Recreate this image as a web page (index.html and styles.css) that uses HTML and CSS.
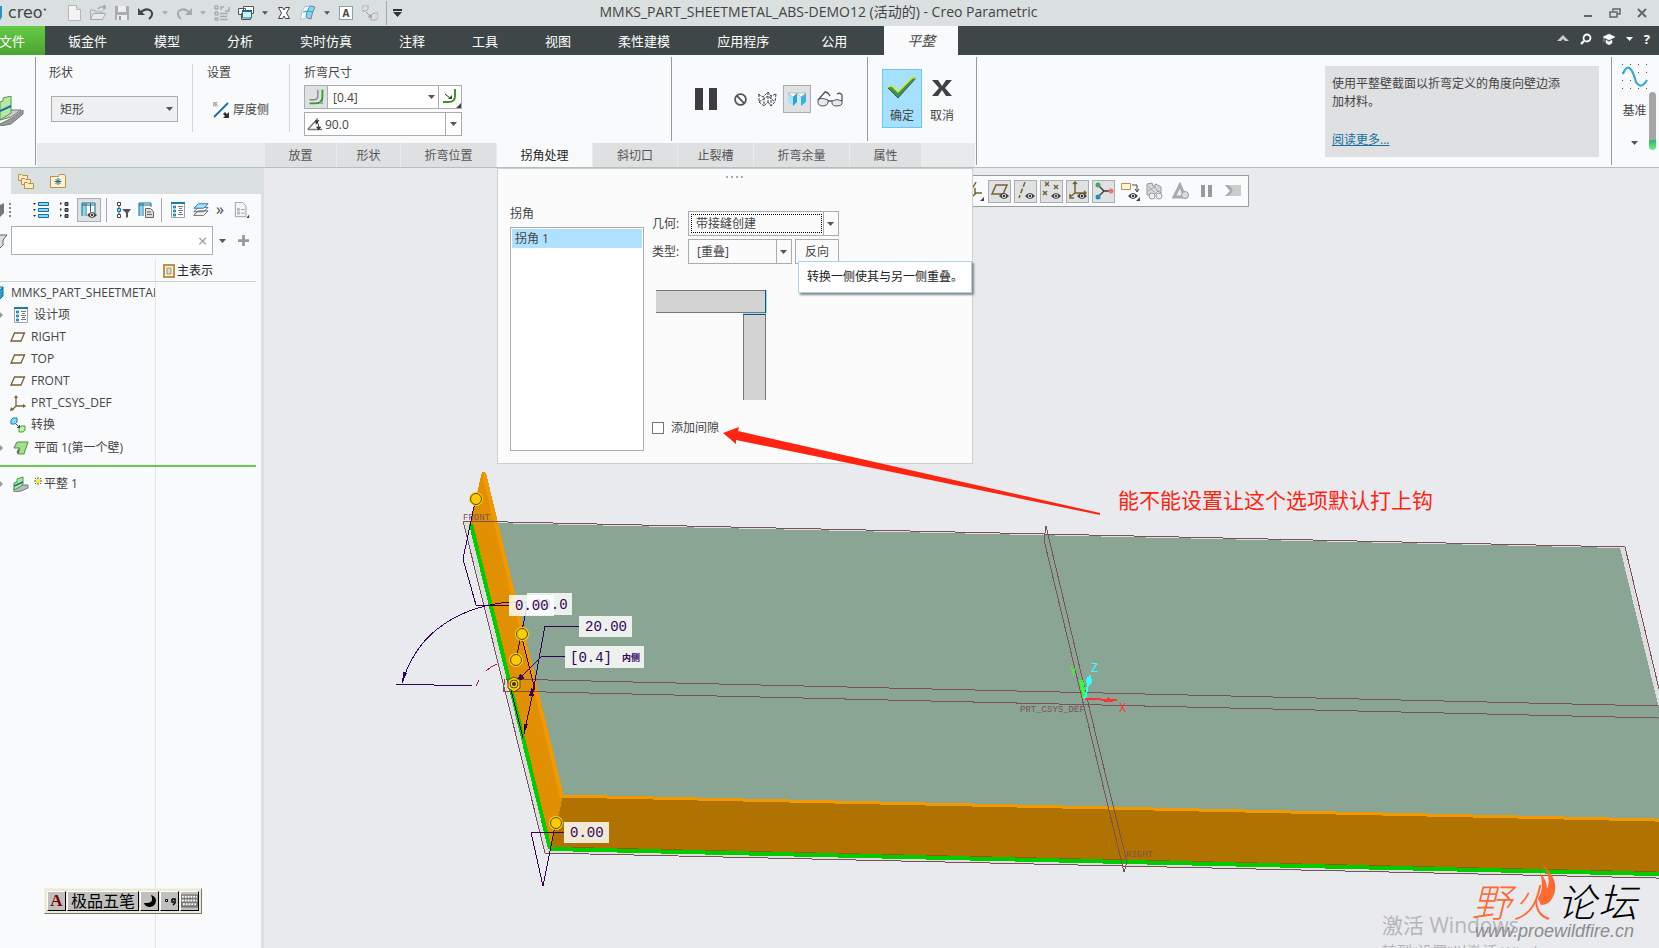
FILE: index.html
```html
<!DOCTYPE html>
<html lang="zh-CN">
<head>
    <meta charset="UTF-8">
    <meta name="viewport" content="width=device-width, initial-scale=1.0">
    <title>MMKS_PART_SHEETMETAL_ABS-DEMO12 (活动的) - Creo Parametric</title>
    <link rel="stylesheet" href="styles.css">
</head>
<body>
    <!-- Shared icons -->
    <svg class="sprite" aria-hidden="true">
        <symbol id="caret" viewBox="0 0 7 4"><path d="M0 0h7L3.500 4z" fill="currentColor"/></symbol>
        <symbol id="plane" viewBox="0 0 16 16"><path d="M4.500 4h10L11 12H1z" fill="none" stroke="#7a6030" stroke-width="1.300"/></symbol>
        <symbol id="eye" viewBox="0 0 10 6"><path d="M0 3Q5-3 10 3Q5 9 0 3z" fill="#444"/><circle cx="5" cy="3" r="2" fill="#fff"/><circle cx="5" cy="3" r="1.200" fill="#333"/></symbol>
        <symbol id="items" viewBox="0 0 16 16"><path d="M1.500.500h13v15h-13z" fill="#fff" stroke="#99a3a8"/><path d="M1 1h14" stroke="#1c7ca8" stroke-width="2"/><path d="M3.500 4h2v2h-2zM3.500 8h2v2h-2zM3.500 12h2v2h-2z" fill="#7fd0f5" stroke="#2280a8"/><path d="M8 4.500h5M9 6.500h3M8 8.500h5M9 10.500h3M8 12.500h5" stroke="#777"/></symbol>
        <symbol id="csys" viewBox="0 0 16 16"><path d="M6 11V2M6 11h9M6 11l-4 4" fill="none" stroke="#7a6030" stroke-width="1.300"/><path d="M6 0l2 3H4zM16 11l-3-2v4zM0 16l1-4 3 3z" fill="#7a6030"/></symbol>
        <symbol id="cube" viewBox="0 0 16 16"><path d="M1 6l5-4h9l-4 4z" fill="#c9efff"/><path d="M1 6h10v9H1z" fill="#8ad6f5"/><path d="M11 6l4-4v9l-4 4z" fill="#279fd0"/><path d="M1 6l5-4h9v9l-4 4H1zM1 6h10v9M11 6l4-4" fill="none" stroke="#176f94"/></symbol>
        <symbol id="flange" viewBox="0 0 24 30"><path d="M0 28l12-6 11-8v4L11 28 0 30z" fill="#999" stroke="#777"/><path d="M0 24l11-3 10-7h-9L0 20z" fill="#ccc" stroke="#777"/><path d="M0 6l3-1V2l8-2v17L0 24z" fill="#b7e8a8" stroke="#4d9b42"/><path d="M0 15l11-5" stroke="#16709c" stroke-width="2"/></symbol>
    </svg>

    <header class="title-bar">
        <div class="quick-access">
            <svg class="brand-mark" viewBox="0 0 2 14"><path d="M0 0h2v11l-2 3z" fill="#2694bf"/></svg>
            <span class="brand">creo<sup>•</sup></span>
            <button aria-label="新建"><svg viewBox="0 0 16 16"><path d="M2.500.500h8l4 4v11h-12z" fill="#f3f3f3" stroke="#b5b8b8"/><path d="M10.500.500v4h4" fill="#ddd" stroke="#b5b8b8"/></svg></button>
            <button aria-label="打开"><svg viewBox="0 0 16 16"><path d="M.500 14V5h4l1 2h7v3" fill="#ddd" stroke="#aaa"/><path d="M.500 14.500l3-6h12l-3 6z" fill="#e9e9e9" stroke="#aaa"/><path d="M8 4q2-3 6-2M14 0v4l2-2z" fill="none" stroke="#aaa" stroke-width="1.500"/></svg></button>
            <button aria-label="保存"><svg viewBox="0 0 16 16"><path d="M1 1h13l1 1v13H1z" fill="#aaadad"/><path d="M4 1h8v6H4zM3 10h10v5H3z" fill="#eee"/><path d="M5 11h2v4H5z" fill="#999"/></svg></button>
            <button aria-label="撤消"><svg viewBox="0 0 16 16"><path d="M2 8q6-6 11-2q3 4-2 8" fill="none" stroke="#444" stroke-width="2"/><path d="M0 3v7h7z" fill="#444"/></svg></button>
            <svg class="caret pale"><use href="#caret"/></svg>
            <button aria-label="重做"><svg viewBox="0 0 16 16"><path d="M14 8Q8 2 3 6q-3 4 2 8" fill="none" stroke="#aaa" stroke-width="2"/><path d="M16 3v7H9z" fill="#aaa"/></svg></button>
            <svg class="caret pale"><use href="#caret"/></svg>
            <button aria-label="重新生成"><svg viewBox="0 0 16 16"><path d="M1 1h3v3H1zM1 7h3v3H1zM1 13h3v2H1z" fill="none" stroke="#999"/><path d="M6 8.500h8M6 11.500h7M6 14.500h8M7 5V2h3M15 2v4h-4" fill="none" stroke="#aaa" stroke-width="1.500"/></svg></button>
            <button aria-label="窗口"><svg viewBox="0 0 16 16"><path d="M5.500 1.500h10v7h-10zM.500 3.500h7v6h-7zM3.500 8.500h9v6h-9z" fill="#fff" stroke="#555"/><path d="M4.500 6h9v7h-9z" fill="#d7f2ff" stroke="#176f94"/><path d="M4 6h10" stroke="#176f94" stroke-width="2"/></svg></button>
            <svg class="caret"><use href="#caret"/></svg>
            <button aria-label="关闭窗口"><svg viewBox="0 0 16 16"><path d="M2.500 2.500h4L8 5l1.500-2.500h4L10.500 8l3 5.500h-4L8 11l-1.500 2.500h-4l3-5.500z" fill="#fff" stroke="#444"/></svg></button>
            <button aria-label="外观"><svg viewBox="0 0 16 16"><path d="M1 14Q1 6 5 2q6-2 10 0-3 5-4 12-5-3-10 0z" fill="#8dd4f2" stroke="#668b9c"/><path d="M1 14Q1 6 5 2l5-1Q6 6 6 13z" fill="#eef9ff"/><path d="M3 7q5-2 10 0M10 1Q6 7 6 12" fill="none" stroke="#3997bb"/></svg></button>
            <svg class="caret"><use href="#caret"/></svg>
            <button class="letter-icon" aria-label="注释显示">A</button>
            <button aria-label="转换"><svg viewBox="0 0 16 16"><path d="M0 2l3-2h3v4L4 6H0zM9 10l3-2h4v5l-2 2H9z" fill="#ddd" stroke="#aaa"/><path d="M4 7l5 5M9 9v3H6" fill="none" stroke="#999"/></svg></button>
            <span class="quick-end"></span>
            <svg class="caret menu" viewBox="0 0 9 8"><path d="M0 0h9v2H0zM0 3h9L4.500 8z" fill="#333"/></svg>
        </div>
        <h1>MMKS_PART_SHEETMETAL_ABS-DEMO12 (活动的) - Creo Parametric</h1>
        <div class="window-buttons">
            <button aria-label="最小化"><svg viewBox="0 0 12 12"><path d="M2 9h8" stroke="#666" stroke-width="2"/></svg></button>
            <button aria-label="还原"><svg viewBox="0 0 12 12"><path d="M4 4V2h7v5H8M1 5h7v5H1z" fill="none" stroke="#666" stroke-width="1.500"/></svg></button>
            <button aria-label="关闭"><svg viewBox="0 0 12 12"><path d="M2 2l8 8M10 2l-8 8" stroke="#666" stroke-width="2"/></svg></button>
        </div>
    </header>

    <nav class="tab-bar">
        <a class="tab file" href="#">文件</a>
        <a class="tab" href="#">钣金件</a>
        <a class="tab" href="#">模型</a>
        <a class="tab" href="#">分析</a>
        <a class="tab" href="#">实时仿真</a>
        <a class="tab" href="#">注释</a>
        <a class="tab" href="#">工具</a>
        <a class="tab" href="#">视图</a>
        <a class="tab" href="#">柔性建模</a>
        <a class="tab" href="#">应用程序</a>
        <a class="tab wide" href="#">公用</a>
        <a class="tab active" href="#">平整</a>
        <div class="tab-tools">
            <button aria-label="最小化功能区"><svg viewBox="0 0 12 12"><path d="M0 8l6-6 6 6H8L6 6 4 8z" fill="#ccc"/></svg></button>
            <button aria-label="搜索"><svg viewBox="0 0 12 12"><circle cx="7" cy="5" r="3.500" fill="none" stroke="#fff" stroke-width="1.800"/><path d="M4 8l-3 3" stroke="#fff" stroke-width="2.400"/></svg></button>
            <button aria-label="学习"><svg viewBox="0 0 12 12"><path d="M0 4l6-3 6 3-6 3zM3 7l3 2 3-2v3l-3 2-3-2zM1 5v4" fill="#fff" stroke="#fff" stroke-width=".5"/></svg></button>
            <svg class="caret white"><use href="#caret"/></svg>
            <button class="help-mark" aria-label="帮助">?</button>
        </div>
    </nav>

    <section class="ribbon">
        <div class="ribbon-icon"><svg viewBox="0 0 24 30"><use href="#flange"/></svg></div>
        <div class="dashboard">
            <div class="groups">
                <div class="group shape">
                    <label for="shape">形状</label>
                    <span class="select">
                        <select id="shape"><option>矩形</option></select>
                        <svg class="caret"><use href="#caret"/></svg>
                    </span>
                </div>
                <div class="group setting">
                    <span>设置</span>
                    <button class="thickness">
                        <svg viewBox="0 0 16 16"><path d="M1 15L15 1" stroke="#16709c" stroke-width="1.800"/><path d="M0 0h5L3.500 1.500 5 3 3 5 1.500 3.500 0 5z" fill="#b5b5b5"/><path d="M16 16h-6l2-2-2-2 2-2 2 2 2-2z" fill="#333"/></svg>
                        厚度侧
                    </button>
                </div>
                <div class="group bend">
                    <label for="radius">折弯尺寸</label>
                    <div class="combo">
                        <svg class="combo-icon filled" viewBox="0 0 24 24"><path d="M5 15h5q4 0 4-4V4" fill="none" stroke="#888" stroke-width="1.500"/><path d="M5 19h6q8 0 8-7V4" fill="none" stroke="#3c9a23" stroke-width="2"/><path d="M14 19h6M19 14v5" stroke="#16709c" stroke-dasharray="1 1"/></svg>
                        <input id="radius" value="[0.4]">
                        <svg class="caret"><use href="#caret"/></svg>
                        <button class="side" aria-label="内侧"><svg viewBox="0 0 22 22"><path d="M4 16h6q6 0 6-6V3" fill="none" stroke="#3c9a23" stroke-width="2"/><path d="M6 8l5 4" stroke="#333"/><path d="M13 13H9l4-4zM22 17v5h-5z" fill="#444"/></svg></button>
                    </div>
                    <div class="combo">
                        <svg class="combo-icon angle" viewBox="0 0 22 22"><path d="M3 17h16M3 17L14 5" fill="none" stroke="#777" stroke-width="1.500"/><path d="M13 8q3 4 2 8" fill="none" stroke="#333"/><path d="M11 7h5l-4 5zM12 14h6l-3 4z" fill="#333"/></svg>
                        <input aria-label="角度" value="90.0">
                        <button class="drop" aria-label="角度列表"><svg class="caret"><use href="#caret"/></svg></button>
                    </div>
                </div>
                <div class="preview">
                    <button aria-label="暂停"><svg class="pause" viewBox="0 0 24 24"><path d="M1 1h8v22H1zM15 1h8v22h-8z" fill="#3d3d3f"/></svg></button>
                    <button aria-label="无预览"><svg class="small" viewBox="0 0 12 12"><circle cx="6" cy="6" r="5" fill="none" stroke="#555" stroke-width="1.600"/><path d="M2.500 2.500l7 7" stroke="#555" stroke-width="1.600"/></svg></button>
                    <button aria-label="分离预览"><svg viewBox="0 0 20 16"><path d="M1 3l5 3 5-5 3 4 5-2M2 3v8l5 4V6M11 1v10l-4 4M14 5v10l-3-4M19 3l-1 8-4 4M2 11l9-6 7 6" fill="none" stroke="#444" stroke-dasharray="3 1"/></svg></button>
                    <button class="pressed" aria-label="连接预览"><svg viewBox="0 0 20 16"><path d="M1 2l5 4v9l-5-4z" fill="#a9e2f9"/><path d="M6 6l4-4v9l-4 4z" fill="#2fa2d8"/><path d="M10 2l4 4v9l-4-4z" fill="#c4edfd"/><path d="M14 6l5-4v9l-5 4z" fill="#3fb0e4"/><path d="M1 2h9L6 6zM10 2h9l-5 4z" fill="#fff" stroke="#999" stroke-width=".6"/></svg></button>
                    <button aria-label="检查"><svg class="glasses" viewBox="0 0 26 16"><path d="M1 9q3-3 10 0v3q-1 3-5 3-5 0-5-4zM15 10q5-3 10 0v3q-1 2-5 2-5 0-5-3z" fill="#e2ecef" stroke="#555"/><path d="M11 10h4M1 9L8 1q3 0 5 4M25 10V4q-2-3-5-1" fill="none" stroke="#555" stroke-width="1.300"/></svg></button>
                </div>
                <div class="confirm">
                    <button class="ok"><svg viewBox="0 0 30 22"><path d="M1 11l4-2 6 6L25 1h4L11 21z" fill="#3c8f62" stroke="#3c5c42"/><path d="M1 10l4-1 6 6L25 1h4" fill="none" stroke="#d8ec10" stroke-width="1.500"/></svg>确定</button>
                    <button><svg viewBox="0 0 30 22"><path d="M5 3h6l4 6 4-6h6l-7 8 7 8h-6l-4-6-4 6H5l7-8z" fill="#3f4143"/></svg>取消</button>
                </div>
            </div>
            <div class="dash-tabs">
                <button>放置</button>
                <button class="narrow">形状</button>
                <button class="long">折弯位置</button>
                <button class="long current">拐角处理</button>
                <button class="notch">斜切口</button>
                <button class="relief">止裂槽</button>
                <button class="long">折弯余量</button>
                <button>属性</button>
            </div>
        </div>
        <aside class="help">
            <p>使用平整壁截面以折弯定义的角度向壁边添加材料。</p>
            <a href="#">阅读更多...</a>
        </aside>
        <div class="datum">
            <svg viewBox="0 0 28 28"><g fill="#555"><path d="M1 1h1v1H1zM9 1h1v1H9zM17 1h1v1h-1zM25 1h1v1h-1zM1 9h1v1H1zM17 9h1v1h-1zM25 9h1v1h-1zM1 17h1v1H1zM9 17h1v1H9zM25 17h1v1h-1zM1 25h1v1H1zM9 25h1v1H9zM17 25h1v1h-1zM25 25h1v1h-1z"/></g><path d="M2 11Q6 0 11 8q3 6 4 11 5 8 11-2" fill="none" stroke="#36a9dd" stroke-width="2.200"/></svg>
            <span>基准</span>
            <svg class="caret"><use href="#caret"/></svg>
        </div>
        <div class="ribbon-scroll"><span></span></div>
    </section>

    <main>
        <aside class="navigator">
            <div class="nav-tabs">
                <span class="nav-current"></span>
                <button aria-label="文件夹浏览器"><svg viewBox="0 0 16 16"><g fill="#ffeac0" stroke="#b8924e"><path d="M.500 1.500h3l1 1h5v5h-9z"/><path d="M3.500 5.500h3l1 1h5v5h-9z"/><path d="M6.500 9.500h3l1 1h5v5h-9z"/></g></svg></button>
                <button aria-label="收藏夹"><svg viewBox="0 0 16 16"><path d="M.500 3.500h8l1-2h5l1 2v11H.500z" fill="#fff0cf" stroke="#b8924e"/><path d="M8 5v7M4.500 8.500h7M5.500 6l5 5M10.500 6l-5 5" stroke="#176f94"/></svg></button>
            </div>
            <div class="nav-tools">
                <svg class="edge" viewBox="0 0 4 14"><path d="M0 2l4-2v10l-4 4z" fill="#777"/></svg>
                <svg class="grip" viewBox="0 0 2 14"><path d="M1 0v14" stroke="#888" stroke-width="2" stroke-dasharray="2 2"/></svg>
                <button class="first" aria-label="展开"><svg viewBox="0 0 16 16"><path d="M0 1h3L1.500 3zM0 7h3L1.500 9zM0 13h3l-1.500 2z" fill="#333"/><path d="M5.500.500h10v3h-10zM5.500 6.500h10v3h-10zM5.500 12.500h10v3h-10z" fill="#8ad6f5" stroke="#176f94"/></svg></button>
                <button aria-label="折叠"><svg viewBox="0 0 16 16"><path d="M4 0v3l2-1.500zM4 6v3l2-1.500zM4 12v3l2-1.500z" fill="#333"/><path d="M9 .500h3v3H9zM9 6.500h3v3H9zM9 12.500h3v3H9z" fill="#777" stroke="#333"/></svg></button>
                <button class="pressed" aria-label="树列"><svg viewBox="0 0 16 16"><path d="M1 1h13v13H1z" fill="#fff"/><path d="M1 1h3v13H1z" fill="#8ad6f5"/><path d="M1 14V1h13v10M5 1v13M9.500 1v9" fill="none" stroke="#176f94"/><path d="M1 3h13" stroke="#176f94"/><svg x="6" y="10" width="10" height="6"><use href="#eye"/></svg></svg></button>
                <span class="bar"></span>
                <button aria-label="过滤器"><svg viewBox="0 0 16 16"><path d="M2.500.500h3v3h-3zM2.500 12.500h3v3h-3zM4 4v8" fill="#fff" stroke="#444"/><path d="M2.500 6.500h3v3h-3z" fill="#8ad6f5" stroke="#176f94"/><path d="M7 7h9l-3 4v4l-2 1v-5z" fill="#555"/></svg></button>
                <button class="roomy" aria-label="树设置"><svg viewBox="0 0 16 16"><path d="M1 1h13v12H1z" fill="#fff"/><path d="M1 1h3v13H1z" fill="#8ad6f5"/><path d="M1 14V1h12v4M1 3h12M5 1v13" fill="none" stroke="#176f94"/><path d="M7.500 6.500h5l3 3v6h-8z" fill="#ddd" stroke="#666"/><path d="M9 10h4M9 12.500h5" stroke="#666"/></svg></button>
                <span class="bar"></span>
                <button aria-label="设计项"><svg viewBox="0 0 16 16"><use href="#items"/></svg></button>
                <button class="roomy" aria-label="层"><svg viewBox="0 0 18 16"><path d="M6 9h11l-5 5H1zM6 5h11l-5 5H1z" fill="#fff" stroke="#555"/><path d="M6 1h11l-5 5H1z" fill="#a8e4fb" stroke="#176f94"/></svg></button>
                <button class="more" aria-label="更多">»</button>
                <button class="last" aria-label="报告"><svg viewBox="0 0 16 18"><path d="M.500.500h8l4 4v12H.500z" fill="#f3f5f5" stroke="#999"/><path d="M3 7.500h2v2H3zM3 11.500h2v2H3z" fill="#fff" stroke="#999"/><path d="M7 8.500h4M7 12.500h4" stroke="#999"/><path d="M16 14v4h-3z" fill="#444"/></svg></button>
            </div>
            <div class="nav-filter">
                <svg class="funnel" viewBox="0 0 8 14"><path d="M0 1h7L3 6v5l-3 3" fill="#ddd" stroke="#666"/></svg>
                <div class="search">
                    <input aria-label="过滤模型树" value="">
                    <button aria-label="清除">×</button>
                </div>
                <svg class="caret"><use href="#caret"/></svg>
                <button class="plus" aria-label="添加"><svg viewBox="0 0 12 12"><path d="M6 0v12M0 6h12" stroke="#999" stroke-width="3"/></svg></button>
            </div>
            <div class="tree-wrap">
                <table class="tree">
                    <colgroup><col class="name-col"><col></colgroup>
                    <thead>
                        <tr><th></th><th><span class="cell"><svg viewBox="0 0 12 14"><path d="M1 1h10v12H1z" fill="#fff0cf" stroke="#b8924e" stroke-width="2"/><path d="M4 4h4v6H4z" fill="#b5e8fb" stroke="#b8924e"/></svg>主表示</span></th></tr>
                    </thead>
                    <tbody>
                        <tr><td><span class="cell root"><svg viewBox="0 0 16 16"><use href="#cube"/></svg>MMKS_PART_SHEETMETAL</span></td><td></td></tr>
                        <tr><td><span class="cell more-in"><svg viewBox="0 0 16 16"><use href="#items"/></svg>设计项</span></td><td></td></tr>
                        <tr><td><span class="cell"><svg viewBox="0 0 16 16"><use href="#plane"/></svg>RIGHT</span></td><td></td></tr>
                        <tr><td><span class="cell"><svg viewBox="0 0 16 16"><use href="#plane"/></svg>TOP</span></td><td></td></tr>
                        <tr><td><span class="cell"><svg viewBox="0 0 16 16"><use href="#plane"/></svg>FRONT</span></td><td></td></tr>
                        <tr><td><span class="cell"><svg viewBox="0 0 16 16"><use href="#csys"/></svg>PRT_CSYS_DEF</span></td><td></td></tr>
                        <tr><td><span class="cell"><svg viewBox="0 0 16 16"><path d="M1 3l2-2h4v4L5 7H1z" fill="#8ad6f5" stroke="#2280a8"/><path d="M9 11l2-2h4v4l-2 2H9z" fill="#bff0a5" stroke="#4d9b42"/><path d="M6 7l3 3M9.500 8v2.500H7" fill="none" stroke="#444"/></svg>转换</span></td><td></td></tr>
                        <tr class="marked"><td><span class="cell more-in"><svg viewBox="0 0 16 16"><path d="M4 2h11l-4 12H5l2-6H1z" fill="#a6df8c" stroke="#4d9b42"/><path d="M1 8l3-6M5 14l-1-2 2-4" stroke="#888"/></svg>平面 1(第一个壁)</span></td><td></td></tr>
                        <tr class="inserting"><td><span class="cell more-in"><svg viewBox="0 0 16 16"><path d="M1 11l6-2 8 0v3l-7 3-7 1z" fill="#bbb" stroke="#777"/><path d="M1 7l3-1V3l6-2v7l-3 3-6 3z" fill="#b0e69b" stroke="#4d9b42"/><path d="M1 10l9-4" stroke="#16709c" stroke-width="1.500"/></svg><svg class="spark" viewBox="0 0 8 8"><path d="M4 0v8M0 4h8M1 1l6 6M7 1L1 7" stroke="#555"/><path d="M2 2h4v4H2z" fill="#ffee10"/></svg>平整 1</span></td><td></td></tr>
                    </tbody>
                </table>
            </div>

            <div class="ime">
                <button class="ime-a" aria-label="输入状态">A</button>
                <button class="ime-name">极品五笔</button>
                <button aria-label="半角"><svg viewBox="0 0 14 14"><path d="M8 1q4 9-7 8 1 4 6 4 6-1 6-7-1-4-5-5z" fill="#000"/></svg></button>
                <button aria-label="标点"><svg viewBox="0 0 14 14"><path d="M2.500 5.500h2v2h-2z" fill="#fff" stroke="#000"/><path d="M9 5h3v4l-2 2M9 5v3h2" fill="none" stroke="#000" stroke-width="1.500"/></svg></button>
                <button aria-label="软键盘"><svg class="keys" viewBox="0 0 18 14"><path d="M0 0h18v14H0z" fill="#777"/><path d="M1 2.500h16M1 6.500h16M2 10.500h14" stroke="#fff" stroke-width="2" stroke-dasharray="2 1"/></svg></button>
            </div>
        </aside>

        <div class="viewport">
            <svg class="scene" viewBox="264 168 1395 780" preserveAspectRatio="xMinYMin slice" shape-rendering="crispEdges">
                <!-- Datum plane and base wall -->
                <path d="M463 521L1625 547 1700 857V880L545 853z" fill="#e0dde1"/>
                <path d="M490 523L1620 548 1697 865V822L561 797z" fill="#8aa594"/>
                <!-- Front wall -->
                <path d="M561 797L1700 822V875L550 849z" fill="#b07200"/>
                <path d="M561 796L1700 821" stroke="#f09a00" stroke-width="3"/>
                <path d="M550 847L1700 873" stroke="#955a00"/>
                <path d="M550 849L1700 875" stroke="#00cc00" stroke-width="4"/>
                <!-- Left wall -->
                <path d="M482 472h3L563 796 551 848 471 524 471 518z" fill="#e09000"/>
                <path d="M484 473L562 797" stroke="#f09a00" stroke-width="4"/>
                <path d="M471 524L550 849" stroke="#00cc00" stroke-width="4"/>
                <g fill="none" stroke="#7c5058">
                    <path d="M463 521L1625 547 1700 860M463 521L545 853 1700 879"/>
                    <path d="M1700 707L505 679 503 691 1700 719"/>
                    <path d="M1046 526L1044 540 1092 740 1124 872 1127 862 1097 740z"/>
                </g>
                <g class="datum-name">
                    <text x="463" y="520">FRONT</text>
                    <text x="1020" y="712">PRT_CSYS_DEF</text>
                    <text x="1126" y="857">RIGHT</text>
                </g>
                <!-- Coordinate system -->
                <g stroke-width="2">
                    <path d="M1085 699L1081 680" stroke="#33ff33" stroke-width="4"/>
                    <path d="M1085 699L1090 675" stroke="#33ffff"/>
                    <path d="M1085 699L1117 700" stroke="#ff3333"/>
                </g>
                <ellipse cx="1089" cy="681" rx="3" ry="4" fill="#33ffff"/>
                <path d="M1104 702l4-5 5 5z" fill="#ff3333"/>
                <g class="axis-name">
                    <text class="y" x="1070" y="676">Y</text>
                    <text class="z" x="1091" y="672">Z</text>
                    <text class="x" x="1119" y="712">X</text>
                </g>
                <!-- Dimension leaders -->
                <g fill="none" stroke="#330055">
                    <path d="M475 502L463 559 476 605H509"/>
                    <path d="M402 683Q412 650 436 630 466 606 509 602H550"/>
                    <path d="M395 684L472 686"/>
                    <path d="M529 596L516 660M522 638L535 690M579 626H545L533 692 524 734M565 656H542L515 683"/>
                    <path d="M511 690L523 738"/>
                    <path d="M564 832H531L543 886 555 826"/>
                </g>
                <path d="M402 684l1-12 4 1zM529 696l3-10 2 10zM524 734l0-10 4 0zM515 683l5-9 5 4z" fill="#330055"/>
                <path d="M486 671Q491 666 497 664M476 686l3-6" fill="none" stroke="#aa1155"/>
                <g shape-rendering="auto">
                    <g fill="none" stroke="#ffd21a" stroke-width="2">
                        <circle cx="476" cy="499" r="6"/><circle cx="522" cy="634" r="6"/><circle cx="516" cy="660" r="6"/><circle cx="556" cy="823" r="6"/>
                    </g>
                    <g fill="#ffcc00" stroke="#554810">
                        <circle cx="476" cy="499" r="5.500"/><circle cx="522" cy="634" r="5.500"/><circle cx="516" cy="660" r="5.500"/><circle cx="556" cy="823" r="5.500"/>
                        <path d="M514 677l6 3v8l-6 4-6-4v-8z"/><circle cx="514" cy="684" r="4"/>
                    </g>
                    <circle cx="514" cy="684" r="2" fill="#333"/>
                </g>
                <g class="dimension">
                    <rect x="527" y="593" width="45" height="22"/><text x="534" y="609">90.0</text>
                    <rect x="509" y="595" width="45" height="21"/><text x="515" y="610">0.00</text>
                    <rect x="579" y="616" width="53" height="21"/><text x="585" y="631">20.00</text>
                    <rect x="565" y="646" width="79" height="22"/><text x="570" y="662">[0.4]</text><text class="inner" x="622" y="661">内侧</text>
                    <rect x="564" y="822" width="45" height="21"/><text x="570" y="837">0.00</text>
                </g>
                <!-- Watermarks -->
                <g class="activate">
                    <text class="large" x="1382" y="933">激活 Windows</text>
                    <text x="1382" y="957">转到“设置”以激活 Windows。</text>
                </g>
                <g class="forum" shape-rendering="auto">
                    <text class="fire" x="1472" y="917">野</text>
                    <text class="fire" x="1513" y="917">火</text>
                    <text x="1557" y="917">论</text>
                    <text x="1598" y="917">坛</text>
                    <path d="M1542 864Q1561 881 1553 897 1549 905 1541 905L1538 899Q1545 888 1540 873 1547 880 1547 889 1552 878 1542 864z" fill="#ff6a33"/>
                    <text class="site" x="1475" y="937">www.proewildfire.cn</text>
                </g>
            </svg>

            <div class="view-tools">
                <button aria-label="基准显示过滤器"><svg viewBox="0 0 20 20"><path d="M12 1L8 8M11 14V7M11 12h7M11 13l-4 4" fill="none" stroke="#7a6030" stroke-width="1.500"/><path d="M20 16v4h-4z" fill="#444"/></svg></button>
                <button class="pressed" aria-label="平面显示"><svg viewBox="0 0 20 20"><path d="M6 4h11l-4 9H2z" fill="none" stroke="#7a6030" stroke-width="1.500"/><svg x="9" y="12" width="10" height="6"><use href="#eye"/></svg></svg></button>
                <button class="pressed" aria-label="轴显示"><svg viewBox="0 0 20 20"><path d="M9 1L3 17" stroke="#7a6030" stroke-width="1.500" stroke-dasharray="5 2"/><svg x="9" y="12" width="10" height="6"><use href="#eye"/></svg></svg></button>
                <button class="pressed" aria-label="点显示"><svg viewBox="0 0 20 20"><path d="M3 1l4 4M7 1L3 5M12 4l4 4M16 4l-4 4M1 10l4 4M5 10l-4 4" stroke="#7a6030" stroke-width="1.500"/><svg x="9" y="12" width="10" height="6"><use href="#eye"/></svg></svg></button>
                <button class="pressed" aria-label="坐标系显示"><svg viewBox="0 0 20 20"><path d="M7 12V1M5 3l2-2 2 2M7 12h11M16 10l2 2-2 2M7 12l-5 4M2 13v4h4" fill="none" stroke="#7a6030" stroke-width="1.500"/><svg x="9" y="12" width="10" height="6"><use href="#eye"/></svg></svg></button>
                <button class="pressed" aria-label="旋转中心"><svg viewBox="0 0 20 20"><path d="M4 4l6 6-6 6M10 10h6" fill="none" stroke="#333" stroke-width="1.300"/><circle cx="4" cy="4" r="2.500" fill="#52a060"/><circle cx="4" cy="16" r="2.500" fill="#258cb9"/><circle cx="17" cy="10" r="2.500" fill="#ef7171"/></svg></button>
                <button aria-label="注释显示"><svg viewBox="0 0 20 20"><path d="M1.500 2.500h9v6h-9z" fill="#fff3d5" stroke="#b8924e"/><path d="M12 4h5v6M15 8l2 3 2-3" fill="none" stroke="#444"/><svg x="8" y="12" width="10" height="6"><use href="#eye"/></svg><path d="M20 16v4h-4z" fill="#444"/></svg></button>
                <button aria-label="仿真"><svg viewBox="0 0 20 20"><path d="M1 3l5-1 1 3 3-2 5 3v6l-3-2-3 3-8 1z" fill="#d5d8d8" stroke="#999"/><path d="M2 5l6 6M7 4l5 6M2 10l8-5" stroke="#aaa"/><circle cx="6" cy="15" r="3" fill="#eee" stroke="#999"/><circle cx="13" cy="15" r="3" fill="#eee" stroke="#999"/></svg></button>
                <button aria-label="几何检查"><svg viewBox="0 0 20 20"><path d="M8 4L2 16h11z" fill="#eee" stroke="#aaa" stroke-width="3"/><circle cx="13" cy="14" r="3.500" fill="#ddd" stroke="#999"/></svg></button>
                <button aria-label="暂停"><svg viewBox="0 0 20 20"><path d="M3 4h4v12H3zM10 4h4v12h-4z" fill="#999"/></svg></button>
                <button aria-label="播放"><svg viewBox="0 0 20 20"><path d="M1 4h16v11H2l5-4z" fill="#ccc"/><path d="M1 4h3q9 5 0 11H1l5-5z" fill="#aaa"/></svg></button>
            </div>

            <form class="corner-panel">
                <svg class="dots" viewBox="0 0 18 2"><path d="M0 0h2v2H0zM5 0h2v2H5zM10 0h2v2h-2zM15 0h2v2h-2z" fill="#aaa"/></svg>
                <div class="corner-body">
                    <div class="corner-list">
                        <span id="corner-label">拐角</span>
                        <ul role="listbox" aria-labelledby="corner-label">
                            <li role="option" aria-selected="true">拐角 1</li>
                        </ul>
                    </div>
                    <div class="corner-fields">
                        <div class="field">
                            <label for="geometry">几何:</label>
                            <span class="select boxed focus">
                                <select id="geometry"><option>带接缝创建</option></select>
                                <svg class="caret"><use href="#caret"/></svg>
                            </span>
                        </div>
                        <div class="field">
                            <label for="type">类型:</label>
                            <span class="select boxed">
                                <select id="type"><option>[重叠]</option></select>
                                <svg class="caret"><use href="#caret"/></svg>
                            </span>
                            <button class="flip" type="button">反向</button>
                        </div>
                        <svg class="overlap" viewBox="0 0 112 110" shape-rendering="crispEdges"><path d="M0 0h110v23H0z" fill="#d3d3d3"/><path d="M0 .500h110M0 22.500h110" stroke="#777"/><path d="M109.500 0v23" stroke="#16567a"/><path d="M110.500 0v23" stroke="#98dcf8"/><path d="M87 24h23v86H87z" fill="#d3d3d3"/><path d="M87.500 24v86M109.500 24v86" stroke="#777"/><path d="M87 23.500h23" stroke="#98dcf8"/><path d="M87 24.500h23" stroke="#16567a"/></svg>
                        <label class="gap-check"><input type="checkbox">添加间隙</label>
                    </div>
                </div>
                <div class="tooltip" role="tooltip">转换一侧使其与另一侧重叠。</div>
            </form>

            <!-- Question note with its arrow -->
            <svg class="note" viewBox="264 168 1395 780" preserveAspectRatio="xMinYMin slice">
                <path d="M723 433L739 427 738 431 1100 513 1100 515 736 440 736 444z" fill="#ff2412"/>
                <text x="1118" y="508">能不能设置让这个选项默认打上钩</text>
            </svg>
        </div>
    </main>
</body>
</html>
```
FILE: styles.css
```css
* {
    box-sizing: border-box;
}
body {
    margin: 0;
    height: 100vh;
    overflow: hidden;
    display: flex;
    flex-direction: column;
    font-family: "Open Sans", "Noto Sans CJK SC", sans-serif;
    font-size: 12px;
    line-height: 18px;
    color: #444;
    background-color: #e9eaee;
}
button, input, select {
    font: inherit;
    color: inherit;
    margin: 0;
    padding: 0;
    border: 0;
    background: none;
    border-radius: 0;
}
a {
    color: inherit;
    text-decoration: none;
}
svg {
    display: block;
    flex: none;
}
button {
    display: flex;
    align-items: center;
    justify-content: center;
    flex: none;
}
button > svg {
    width: 16px;
    height: 16px;
}
.sprite {
    position: absolute;
    width: 0;
    height: 0;
}
.caret {
    width: 7px;
    height: 4px;
    color: #555;
}
.caret.pale {
    color: #aaa;
}
.caret.white {
    color: #fff;
}
.pressed {
    background-color: #dfe1e3;
    border: 1px solid #aaadaf;
}

/* Title bar */
.title-bar {
    display: grid;
    grid-template-columns: 1fr auto 1fr;
    align-items: center;
    height: 26px;
    flex: none;
    background-color: #dadfdf;
}
.title-bar h1 {
    margin: 0;
    padding-right: 22px;
    font-size: 14px;
    font-weight: normal;
    line-height: 24px;
    height: 26px;
}
.quick-access {
    display: flex;
    align-items: center;
    gap: 8px;
    height: 24px;
}
.quick-access .caret {
    width: 6px;
}
.quick-access .caret.menu {
    width: 9px;
    height: 8px;
}
.brand-mark {
    width: 2px;
    height: 14px;
}
.brand {
    width: 50px;
    margin-left: -2px;
    font-family: "DejaVu Sans", sans-serif;
    font-size: 16px;
}
.brand sup {
    font-size: 7px;
    line-height: 0;
}
.letter-icon {
    width: 14px;
    height: 14px;
    margin: 0 1px;
    background-color: #fff;
    border: 1px solid #8aa0aa;
    font-size: 10px;
    font-weight: bold;
}
.quick-end {
    width: 1px;
    height: 24px;
    margin-right: -2px;
    background-color: #a5abab;
}
.window-buttons {
    display: flex;
    justify-content: flex-end;
    gap: 15px;
    padding-right: 11px;
}
.window-buttons svg, .tab-tools button > svg {
    width: 12px;
    height: 12px;
}

/* Main tabs */
.tab-bar {
    display: flex;
    gap: 1px;
    height: 29px;
    flex: none;
    background-color: #3e4647;
    color: #fff;
    font-size: 13px;
    line-height: 30px;
}
.tab {
    padding: 0 23px;
    text-align: center;
    white-space: nowrap;
}
.tab.file {
    width: 45px;
    margin-right: -1px;
    padding: 0 20px 0 0;
    direction: rtl;
    background: linear-gradient(#65cb45, #4ca333);
}
.tab.wide {
    min-width: 82px;
}
.tab.active {
    margin-left: 8px;
    background-color: #f9fafc;
    color: #444;
    font-size: 14px;
    font-style: italic;
}
.tab-tools {
    display: flex;
    align-items: center;
    gap: 11px;
    margin-left: auto;
    padding: 0 9px 4px 0;
}
.help-mark {
    font-weight: bold;
}

/* Ribbon */
.ribbon {
    display: flex;
    height: 113px;
    flex: none;
    background-color: #f9fafc;
    border-bottom: 1px solid #b4bfbf;
}
.ribbon-icon {
    width: 36px;
    margin: 2px 0;
    padding-top: 39px;
    border-right: 1px solid #999;
}
.ribbon-icon svg {
    width: 24px;
    height: 30px;
}
.dashboard {
    display: flex;
    flex-direction: column;
    width: 941px;
    padding-left: 1px;
    flex: none;
    background: linear-gradient(#999, #999) right 2px / 1px 108px no-repeat;
}
.groups {
    display: flex;
    height: 88px;
    flex: none;
}
.group {
    display: flex;
    flex-direction: column;
    margin: 9px 0 11px;
    border-right: 1px solid #d3d6d8;
}
.shape {
    width: 156px;
    padding-left: 12px;
    gap: 14px;
}
.shape .select {
    margin-left: 2px;
    width: 127px;
    height: 26px;
    background-color: #eef0f1;
}
.setting {
    width: 97px;
    padding-left: 14px;
    gap: 19px;
}
.thickness {
    align-self: flex-start;
    gap: 4px;
    margin-left: 6px;
}
.bend {
    padding-left: 14px;
    gap: 3px;
    border: 0;
}
.select {
    position: relative;
    display: block;
    border: 1px solid #aaadaf;
}
.select select {
    width: 100%;
    height: 100%;
    padding: 1px 8px 0;
    appearance: none;
}
.select .caret {
    position: absolute;
    right: 4px;
    top: 50%;
    margin-top: -2px;
    pointer-events: none;
}
.combo {
    display: flex;
    align-items: center;
    width: 158px;
    height: 24px;
    border: 1px solid #aaadaf;
    background-color: #fff;
}
.combo input {
    flex: 1;
    min-width: 0;
    height: 22px;
    padding-left: 5px;
}
.combo-icon {
    width: 23px;
    height: 22px;
}
.combo-icon.filled {
    background-color: #dfe0e2;
    border-right: 1px solid #aaadaf;
}
.combo-icon.angle {
    width: 20px;
}
.combo-icon.angle + input {
    padding-left: 0;
}
.combo .side {
    margin-left: 3px;
    width: 23px;
    height: 22px;
    border-left: 1px solid #aaadaf;
}
.side svg {
    width: 22px;
    height: 22px;
}
.combo .drop {
    width: 16px;
    height: 22px;
    border-left: 1px solid #aaadaf;
}
.drop .caret {
    width: 7px;
    height: 4px;
}
.preview {
    display: flex;
    align-items: center;
    justify-content: center;
    gap: 10px;
    width: 197px;
    margin: 2px 0 2px auto;
    padding-right: 2px;
    border-left: 1px solid #999;
    border-right: 1px solid #999;
}
.preview button > svg {
    width: 20px;
    height: 16px;
}
.preview button > .pause {
    width: 24px;
    height: 24px;
}
.preview button > .small {
    width: 13px;
    height: 13px;
    margin-left: 6px;
}
.preview button > .glasses {
    width: 26px;
}
.preview .pressed {
    width: 28px;
    height: 28px;
    margin: 0 -4px;
}
.confirm {
    display: flex;
    align-items: flex-start;
    width: 109px;
    padding: 14px 0 0 14px;
}
.confirm button {
    flex-direction: column;
    width: 40px;
    height: 59px;
    padding-top: 4px;
    gap: 8px;
}
.confirm button > svg {
    width: 30px;
    height: 22px;
}
.confirm .ok {
    background-color: #a5e0fe;
    border: 1px solid #6cc6f5;
}
.dash-tabs {
    display: flex;
    gap: 1px;
    height: 24px;
    margin-right: 2px;
    padding-left: 228px;
    background-color: #e9eaeb;
}
.dash-tabs button {
    width: 71px;
    padding-top: 2px;
    background-color: #dfe0e1;
    color: #555;
}
.dash-tabs .narrow {
    width: 63px;
}
.dash-tabs .long {
    width: 95px;
}
.dash-tabs .notch {
    width: 84px;
}
.dash-tabs .relief {
    width: 75px;
}
.dash-tabs .current {
    background-color: #f9fafc;
    color: #222;
}
.help {
    width: 274px;
    height: 91px;
    margin: 11px 12px 0 auto;
    padding: 9px 36px 0 7px;
    background-color: #dfe0e2;
}
.help p {
    margin: 0 0 20px;
}
.help a {
    color: #16709c;
    text-decoration: underline;
}
.datum {
    display: flex;
    flex-direction: column;
    align-items: center;
    width: 38px;
    margin: 2px 0;
    padding: 6px 0 0 8px;
    border-left: 1px solid #999;
    white-space: nowrap;
}
.datum > svg:first-child {
    width: 28px;
    height: 28px;
    margin-bottom: 11px;
}
.datum > .caret {
    margin-top: 21px;
}
.ribbon-scroll {
    width: 10px;
    padding: 37px 3px 0 0;
}
.ribbon-scroll span {
    display: block;
    height: 58px;
    border-radius: 4px;
    background: linear-gradient(#a5a5a5 48px, #2db568 48px, #70f080);
}

/* Navigator */
main {
    display: flex;
    flex: 1;
    min-height: 0;
}
.navigator {
    position: relative;
    display: flex;
    flex-direction: column;
    width: 264px;
    flex: none;
    border-right: 3px solid #dadfdf;
    background-color: #f8fafc;
}
.nav-tabs {
    display: flex;
    align-items: center;
    gap: 16px;
    height: 26px;
    flex: none;
    background-color: #dadfdf;
}
.nav-current {
    width: 11px;
    height: 26px;
    margin-right: -9px;
    background-color: #f8fafc;
}
.nav-tools {
    display: flex;
    align-items: center;
    gap: 5px;
    height: 32px;
    flex: none;
}
.edge {
    width: 4px;
    height: 14px;
}
.grip {
    width: 2px;
    height: 14px;
}
.nav-tools .first {
    margin-left: 17px;
}
.nav-tools .pressed {
    width: 24px;
    height: 24px;
}
.nav-tools .bar {
    width: 1px;
    height: 24px;
    background-color: #a5abab;
}
.nav-tools .first + button {
    margin-left: 2px;
}
.nav-tools .roomy {
    margin: 0 2px;
}
.nav-tools .more {
    font-size: 16px;
    padding-bottom: 2px;
}
.nav-tools .last {
    margin-left: 5px;
}
.nav-tools .bar + button {
    margin-left: 3px;
}
.nav-filter {
    display: flex;
    align-items: center;
    height: 29px;
    flex: none;
}
.funnel {
    width: 8px;
    height: 14px;
}
.search {
    display: flex;
    width: 202px;
    height: 29px;
    margin: 0 6px 0 3px;
    border: 1px solid #a5b2b5;
    background-color: #fff;
}
.search input {
    flex: 1;
    min-width: 0;
    padding-left: 4px;
}
.search button {
    width: 19px;
    color: #999;
    font-size: 17px;
}
.plus {
    margin-left: 12px;
}
.plus svg {
    width: 11px;
    height: 11px;
}
.tree-wrap {
    flex: 1;
    margin: 4px 5px 0 0;
    background: linear-gradient(#e3e5e8, #e3e5e8) 155px 0 / 1px 100% no-repeat;
}
.tree {
    width: 100%;
    table-layout: fixed;
    border-collapse: collapse;
}
.name-col {
    width: 155px;
}
.tree th, .tree td {
    height: 22px;
    padding: 0;
    overflow: hidden;
    font-weight: normal;
}
.tree th {
    border-bottom: 1px solid #cfd2d4;
}
.tree th + th {
    padding-left: 8px;
    color: #222;
}
.tree .cell {
    display: flex;
    align-items: center;
    gap: 5px;
    height: 22px;
    padding-left: 10px;
    white-space: nowrap;
}
.tree th .cell {
    gap: 2px;
    padding: 2px 0 0;
}
.tree .cell svg {
    width: 16px;
    height: 16px;
}
.tree th .cell svg {
    width: 12px;
    height: 14px;
}
.tree .root {
    gap: 7px;
    padding-left: 0;
    margin-left: -12px;
}
.tree .more-in {
    padding-left: 0;
}
.tree .more-in::before {
    content: "";
    width: 5px;
    border: 3px solid transparent;
    border-left-color: #999;
    border-right: 0;
}
.tree .cell .spark {
    width: 8px;
    height: 8px;
    margin: 0 -3px 6px 0;
}
.tree .marked td {
    height: 30px;
    padding-bottom: 6px;
    border-bottom: 2px solid #69c653;
}
.tree .inserting td {
    height: 35px;
}

/* Floating input method bar */
.ime {
    position: absolute;
    left: 44px;
    bottom: 34px;
    display: flex;
    gap: 1px;
    padding: 2px;
    border: 1px solid;
    border-color: #f5f0e0 #777568 #777568 #f5f0e0;
    background-color: #ece8da;
    color: #000;
}
.ime button {
    width: 19px;
    height: 20px;
    background-color: #c0c0c0;
    border: 1px solid;
    border-color: #fff #000 #000 #fff;
}
.ime button > svg {
    width: 14px;
    height: 14px;
}
.ime button > .keys {
    width: 17px;
}
.ime .ime-name {
    width: 72px;
    font-size: 16px;
}
.ime .ime-a {
    color: #800000;
    font-family: "Liberation Serif", serif;
    font-size: 17px;
    font-weight: bold;
}

/* Graphics area */
.viewport {
    position: relative;
    flex: 1;
    min-width: 0;
    overflow: hidden;
}
.scene, .note {
    position: absolute;
    left: 0;
    top: 0;
    width: 100%;
    height: 100%;
}
.note {
    pointer-events: none;
    fill: #ff2412;
    font-size: 21px;
}
.datum-name, .axis-name {
    font-family: "Liberation Mono", monospace;
    font-size: 9px;
    fill: #7c5058;
}
.axis-name {
    font-size: 12px;
}
.axis-name .x {
    fill: #ff3333;
}
.axis-name .y {
    fill: #33ff33;
}
.axis-name .z {
    fill: #33ffff;
}
.dimension {
    font-family: "Liberation Mono", "Noto Sans CJK SC", monospace;
    font-size: 14px;
    fill: #330055;
}
.dimension rect {
    fill: #fff;
    fill-opacity: .84;
}
.dimension .inner {
    font-size: 9px;
    font-weight: bold;
}
.activate {
    font-size: 15px;
    fill: #b5b5b9;
}
.activate .large {
    font-size: 21px;
}
.forum {
    font-size: 39px;
    font-style: italic;
    font-weight: 300;
}
.forum .fire {
    fill: #ff6a33;
}
.forum .site {
    font-family: "Liberation Sans", sans-serif;
    font-size: 18px;
    fill: #8b8b8f;
}
.view-tools {
    position: absolute;
    left: 696px;
    top: 7px;
    display: flex;
    align-items: center;
    gap: 3px;
    height: 32px;
    padding: 0 3px 0 1px;
    border: 1px solid #999da0;
    background-color: #f8fafc;
}
.view-tools button {
    width: 23px;
    height: 23px;
}
.view-tools button > svg {
    width: 20px;
    height: 20px;
}

/* Corner treatment panel */
.corner-panel {
    position: absolute;
    left: 233px;
    top: 0;
    width: 476px;
    height: 296px;
    border: 1px solid #cdd0d3;
    background-color: #fbfbfb;
}
.dots {
    width: 18px;
    height: 2px;
    margin: 7px auto;
}
.corner-body {
    display: flex;
    gap: 8px;
    padding-left: 12px;
}
.corner-list {
    width: 134px;
    padding-top: 20px;
}
.corner-list ul {
    height: 224px;
    margin: 4px 0 0;
    padding: 1px;
    border: 1px solid #aaadaf;
    background-color: #fff;
    list-style: none;
}
.corner-list li {
    height: 19px;
    padding: 1px 0 0 3px;
    background-color: #b0e2ff;
}
.corner-fields {
    display: flex;
    flex-direction: column;
    gap: 3px;
    padding-top: 26px;
}
.field {
    display: flex;
    align-items: center;
    gap: 3px;
}
.field label {
    width: 33px;
}
.boxed {
    width: 104px;
    height: 25px;
    background: linear-gradient(#aaadaf, #aaadaf) right 14px top 0 / 1px 100% no-repeat;
}
.boxed.focus {
    width: 151px;
}
.focus select {
    width: 131px;
    height: 19px;
    margin: 2px;
    padding: 0 4px;
    border: 1px dotted #000;
    display: block;
}
.flip {
    width: 44px;
    height: 25px;
    border: 1px solid #aaadaf;
}
.overlap {
    width: 112px;
    height: 110px;
    margin: 23px 0 16px 4px;
}
.gap-check {
    display: flex;
    align-items: center;
    gap: 7px;
}
.gap-check input {
    width: 12px;
    height: 12px;
    appearance: none;
    border: 1px solid #777;
    background-color: #fff;
}
.tooltip {
    position: absolute;
    left: 300px;
    top: 92px;
    width: 174px;
    padding: 6px 8px;
    border: 1px solid #a9d5ed;
    background-color: #fff;
    color: #222;
    box-shadow: 2px 2px 2px #888;
    white-space: nowrap;
}
```
